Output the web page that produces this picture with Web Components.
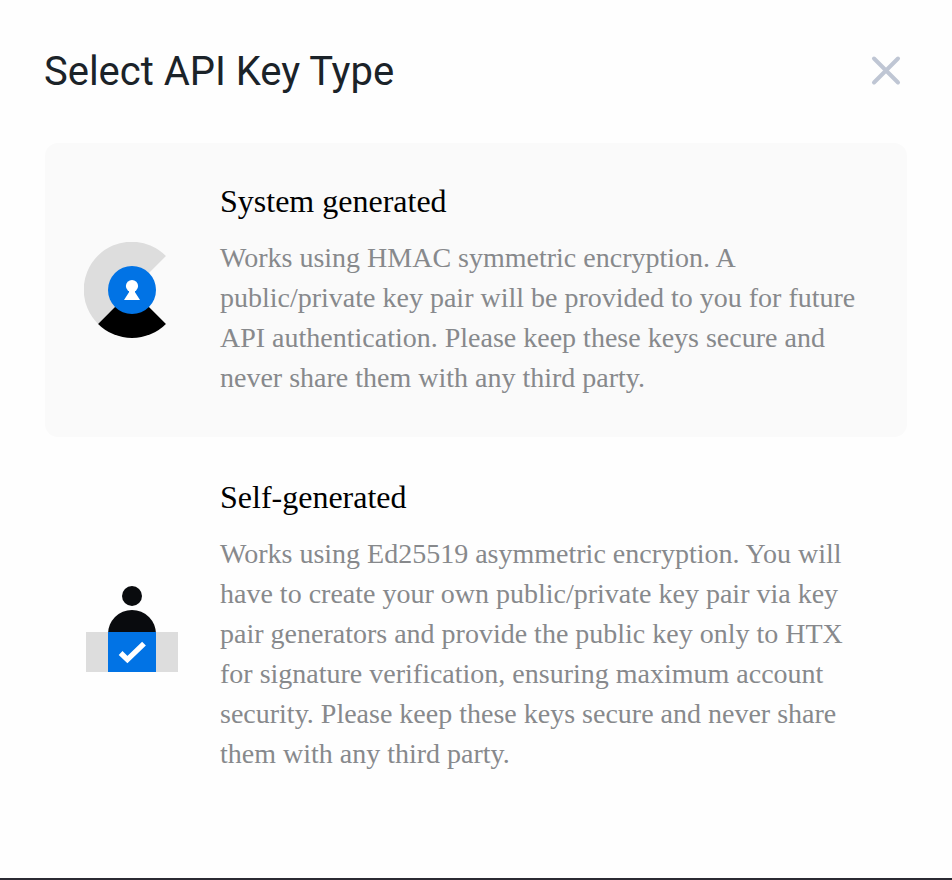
<!DOCTYPE html>
<html lang="en">
<head>
<meta charset="UTF-8">
<title>Select API Key Type</title>
<style>
    html, body {
        margin: 0;
        height: 100%;
        background: #FEFEFE;
    }
</style>
</head>
<body>
<key-dialog>
    <span slot="title">Select API Key Type</span>
    <key-option selected>
        <system-icon slot="icon"></system-icon>
        <span slot="name">System generated</span>
        Works using HMAC symmetric encryption. A<br>
        public/private key pair will be provided to you for future<br>
        API authentication. Please keep these keys secure and<br>
        never share them with any third party.
    </key-option>
    <key-option>
        <self-icon slot="icon"></self-icon>
        <span slot="name">Self-generated</span>
        Works using Ed25519 asymmetric encryption. You will<br>
        have to create your own public/private key pair via key<br>
        pair generators and provide the public key only to HTX<br>
        for signature verification, ensuring maximum account<br>
        security. Please keep these keys secure and never share<br>
        them with any third party.
    </key-option>
</key-dialog>

<script>
class KeyDialog extends HTMLElement {
    constructor() {
        super();
        this.attachShadow({ mode: 'open' });
        this.shadowRoot.innerHTML = `
            <style>
                :host {
                    display: flex;
                    flex-direction: column;
                    box-sizing: border-box;
                    height: 880px;
                    padding: 0 44px;
                    border-bottom: 2px solid #2B2A33;
                }
                header {
                    display: flex;
                    align-items: center;
                    justify-content: space-between;
                    height: 142px;
                }
                h1 {
                    margin: 0;
                    padding-top: 2px;
                    font: 400 40px/48px Roboto, sans-serif;
                    letter-spacing: -0.03px;
                    color: #1B2329;
                }
                button {
                    display: flex;
                    padding: 0;
                    margin-right: 6px;
                    border: 0;
                    background: none;
                }
            </style>
            <header>
                <h1><slot name="title"></slot></h1>
                <button aria-label="Close">
                    <svg width="32" height="32" viewBox="0 0 32 32" fill="none" stroke="#BFC6D4" stroke-width="4" stroke-linecap="round">
                        <path d="M4 3.5 28 27.5M28 3.5 4 27.5" />
                    </svg>
                </button>
            </header>
            <slot></slot>
        `;
    }
}

class KeyOption extends HTMLElement {
    constructor() {
        super();
        this.attachShadow({ mode: 'open' });
        this.shadowRoot.innerHTML = `
            <style>
                :host {
                    display: flex;
                    align-items: center;
                    gap: 40px;
                    padding: 39px;
                    border: 1px solid transparent;
                    border-radius: 14px;
                    background-clip: padding-box;
                    font-family: "Liberation Serif", serif;
                }
                :host([selected]) {
                    background-color: #FAFAFA;
                }
                .text {
                    flex: 1;
                    white-space: nowrap;
                }
                h2 {
                    margin: 0 0 18px;
                    font-size: 32px;
                    font-weight: 400;
                    line-height: 38px;
                    color: #000;
                }
                p {
                    margin: 0;
                    font-size: 28px;
                    line-height: 40px;
                    color: #87898C;
                }
            </style>
            <slot name="icon"></slot>
            <div class="text">
                <h2><slot name="name"></slot></h2>
                <p><slot></slot></p>
            </div>
        `;
    }
}

class SystemIcon extends HTMLElement {
    constructor() {
        super();
        this.attachShadow({ mode: 'open' });
        this.shadowRoot.innerHTML = `
            <style>
                :host { display: block; width: 96px; height: 96px; }
                svg { display: block; }
            </style>
            <svg width="96" height="96" viewBox="0 0 96 96">
                <path fill="#DDD" d="M48 48 81.94 14.06A48 48 0 1 0 14.06 81.94Z" />
                <path fill="#000" d="M48 48 14.06 81.94A48 48 0 0 0 81.94 81.94Z" />
                <circle cx="48" cy="48" r="24" fill="#0173E5" />
                <circle cx="48" cy="44" r="6.1" fill="#FFF" />
                <path fill="#FFF" d="M45 48h6v2.2L56 58H40l5-7.8Z" />
            </svg>
        `;
    }
}

class SelfIcon extends HTMLElement {
    constructor() {
        super();
        this.attachShadow({ mode: 'open' });
        this.shadowRoot.innerHTML = `
            <style>
                :host { display: block; width: 96px; height: 96px; }
                svg { display: block; }
            </style>
            <svg width="96" height="96" viewBox="0 0 96 96">
                <circle cx="48" cy="18" r="10" fill="#090B0E" />
                <path fill="#090B0E" d="M24 56a24 24 0 0 1 48 0Z" />
                <path fill="#DDD" d="M2 54h92v40H2z" />
                <path fill="#0173E5" d="M24 54h48v40H24z" />
                <path d="m36.6 75 6.8 6.6L60 65.6" fill="none" stroke="#FFF" stroke-width="5.4" />
            </svg>
        `;
    }
}

customElements.define('system-icon', SystemIcon);
customElements.define('self-icon', SelfIcon);
customElements.define('key-option', KeyOption);
customElements.define('key-dialog', KeyDialog);
</script>
</body>
</html>
